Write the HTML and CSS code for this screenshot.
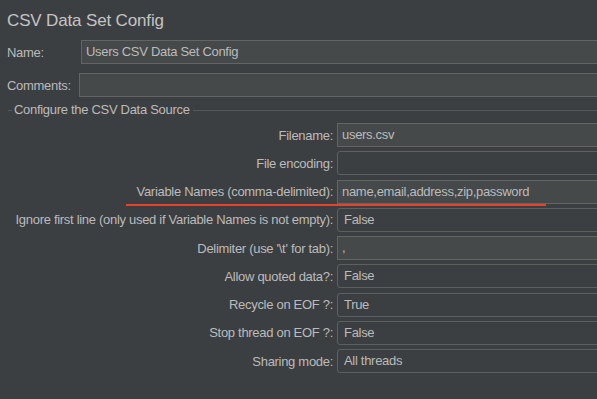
FILE: index.html
```html
<!DOCTYPE html>
<html lang="en">
<head>
    <meta charset="UTF-8">
    <meta name="viewport" content="width=device-width, initial-scale=1.0">
    <title>CSV Data Set Config</title>
    <link rel="stylesheet" href="styles.css">
</head>
<body>
    <div class="panel">
        <h1 class="title">CSV Data Set Config</h1>

        <div class="top-row">
            <label class="top-label name-label">Name:</label>
            <div class="text-field">Users CSV Data Set Config</div>
        </div>
        <div class="top-row">
            <label class="top-label comments-label">Comments:</label>
            <div class="text-field"></div>
        </div>

        <div class="group">
            <div class="group-title">
                <span class="group-line short"></span>
                <span class="group-text">Configure the CSV Data Source</span>
                <span class="group-line"></span>
            </div>

            <div class="form-grid">
                <label class="form-label">Filename:</label>
                <div class="text-field">users.csv</div>

                <label class="form-label">File encoding:</label>
                <div class="combo"></div>

                <label class="form-label">
                    <span class="marked">Variable Names (comma-delimited):</span>
                </label>
                <div class="text-field">
                    <span class="marked-value">name,email,address,zip,password</span>
                </div>

                <label class="form-label">Ignore first line (only used if Variable Names is not empty):</label>
                <div class="combo">False</div>

                <label class="form-label">Delimiter (use '\t' for tab):</label>
                <div class="text-field">,</div>

                <label class="form-label">Allow quoted data?:</label>
                <div class="combo">False</div>

                <label class="form-label">Recycle on EOF ?:</label>
                <div class="combo">True</div>

                <label class="form-label">Stop thread on EOF ?:</label>
                <div class="combo">False</div>

                <label class="form-label">Sharing mode:</label>
                <div class="combo">All threads</div>
            </div>
        </div>
    </div>
</body>
</html>
```

FILE: styles.css
```css
html, body {
    margin: 0;
    overflow: hidden;
}
body {
    background-color: #3c3f41;
    color: #bbbbbb;
    font-family: "Liberation Sans", Arial, sans-serif;
    font-size: 13px;
    letter-spacing: -0.3px;
    height: 399px;
}
.panel {
    width: calc(100% + 20px);
    padding-top: 11px;
}
.title {
    margin: 0 0 9px 7px;
    font-size: 17px;
    line-height: 20px;
    font-weight: normal;
    letter-spacing: -0.15px;
    color: #c4c4c4;
}
.top-row {
    display: flex;
    align-items: center;
    height: 24px;
    margin-bottom: 9px;
    padding-left: 7px;
}
.top-label {
    flex: none;
}
.name-label {
    width: 74px;
}
.comments-label {
    width: 72px;
}
.text-field {
    flex: 1;
    box-sizing: border-box;
    height: 24px;
    line-height: 22px;
    padding: 0 4px;
    background-color: #45494a;
    border: 1px solid #646464;
    white-space: nowrap;
}
.combo {
    box-sizing: border-box;
    height: 24px;
    line-height: 22px;
    padding: 0 6px;
    background-color: #3c3f41;
    border: 1px solid #5e6060;
    border-radius: 3px;
}
.group-title {
    display: flex;
    align-items: center;
    height: 16px;
    margin-top: -4px;
    padding-left: 8px;
}
.group-line {
    flex: 1;
    height: 1px;
    background-color: #555859;
}
.group-line.short {
    flex: none;
    width: 4px;
}
.group-text {
    padding: 0 3px 0 2px;
    line-height: 16px;
}
.form-grid {
    display: grid;
    grid-template-columns: 321px 1fr;
    column-gap: 4px;
    row-gap: 4.25px;
    grid-auto-rows: 24px;
    margin-top: 5px;
    padding-left: 12px;
}
.form-label {
    display: flex;
    align-items: center;
    justify-content: flex-end;
    white-space: nowrap;
}
.marked {
    position: relative;
}
/* red underline drawn across label and value */
.marked::after {
    content: "";
    position: absolute;
    left: -11px;
    right: -10px;
    bottom: -7px;
    height: 2px;
    background-color: #e5432a;
}
.marked-value {
    position: relative;
}
.marked-value::after {
    content: "";
    position: absolute;
    left: -5px;
    right: -17px;
    bottom: -7px;
    height: 2px;
    background-color: #e5432a;
}
```
